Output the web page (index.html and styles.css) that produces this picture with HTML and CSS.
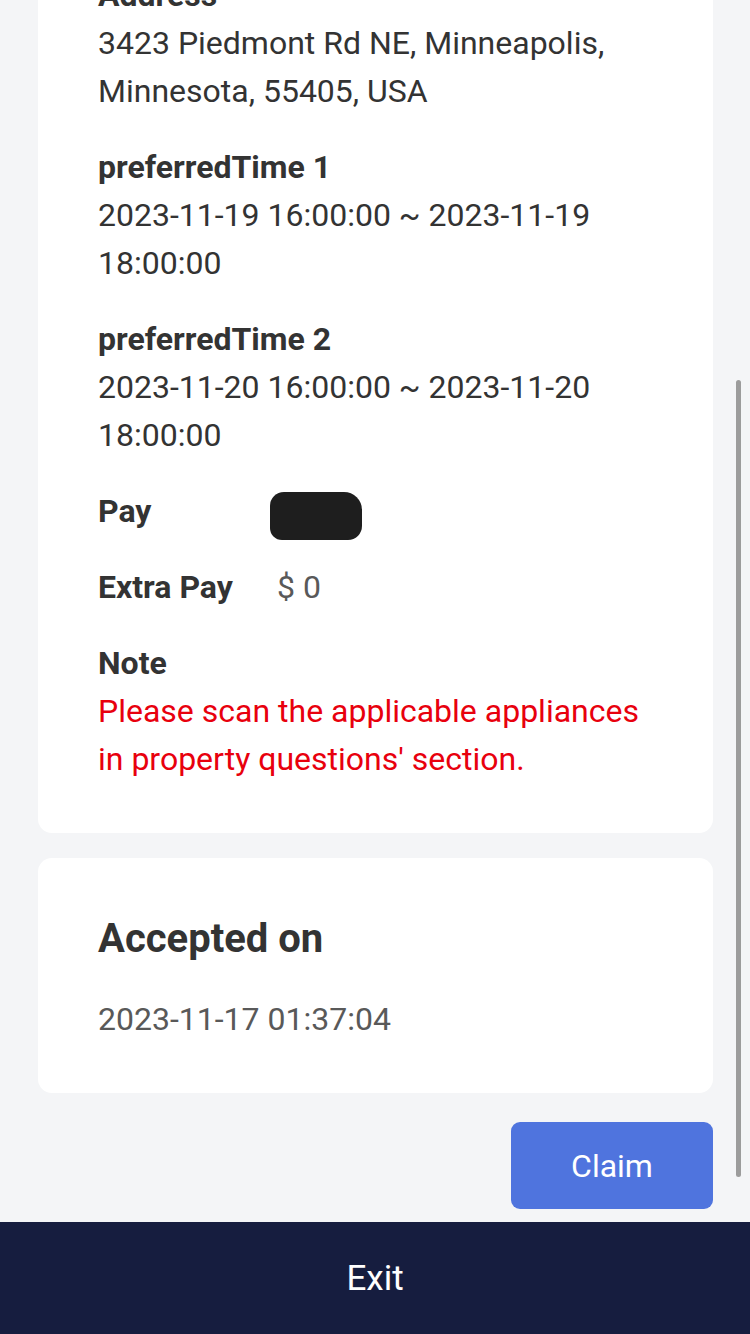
FILE: index.html
```html
<!DOCTYPE html>
<html lang="en">
<head>
<meta charset="utf-8">
<title>Job detail</title>
<link rel="stylesheet" href="styles.css">
</head>
<body>
<div class="page">
  <main class="scroll">
    <div class="scroll-content">
      <section class="card card-detail">
        <div class="item">
          <div class="label">Address</div>
          <div class="value">3423 Piedmont Rd NE, Minneapolis, Minnesota, 55405, USA</div>
        </div>
        <div class="item">
          <div class="label">preferredTime 1</div>
          <div class="value">2023-11-19 16:00:00 ~ 2023-11-19 18:00:00</div>
        </div>
        <div class="item">
          <div class="label">preferredTime 2</div>
          <div class="value">2023-11-20 16:00:00 ~ 2023-11-20 18:00:00</div>
        </div>
        <div class="item row">
          <div class="label label-fixed">Pay</div>
          <div class="value-inline"><span class="redacted"></span></div>
        </div>
        <div class="item row">
          <div class="label label-fixed">Extra Pay</div>
          <div class="value-inline muted money">$ 0</div>
        </div>
        <div class="item">
          <div class="label">Note</div>
          <div class="value note">Please scan the applicable appliances in property questions' section.</div>
        </div>
      </section>
      <section class="card card-accepted">
        <h2 class="heading">Accepted on</h2>
        <div class="value muted">2023-11-17 01:37:04</div>
      </section>
      <div class="actions">
        <button class="btn-claim" type="button">Claim</button>
      </div>
    </div>
    <div class="scroll-thumb"></div>
  </main>
  <footer class="exit-bar">Exit</footer>
</div>
</body>
</html>
```
FILE: styles.css
```css
* { box-sizing: border-box; }
html, body {
  margin: 0;
  padding: 0;
}
body {
  background: #f4f5f7;
  font-family: Roboto, "Liberation Sans", Arial, sans-serif;
  color: #333333;
}
.page {
  width: 750px;
  height: 1334px;
  display: flex;
  flex-direction: column;
  overflow: hidden;
}
.scroll {
  position: relative;
  flex: 1;
  overflow: hidden;
  background: #f4f5f7;
}
.scroll-content {
  margin-top: -79px;
  padding: 0 37px 0 38px;
  display: flex;
  flex-direction: column;
}
.card {
  background: #ffffff;
  border-radius: 14px;
  padding: 50px 60px;
}
.card-accepted {
  margin-top: 25px;
  padding-top: 57px;
}
.item {
  margin-bottom: 28px;
}
.item:last-child {
  margin-bottom: 0;
}
.label {
  font-size: 32px;
  line-height: 48px;
  font-weight: 700;
  color: #333333;
}
.value {
  font-size: 32px;
  line-height: 48px;
  color: #333333;
}
.row {
  display: flex;
  align-items: center;
}
.label-fixed {
  width: 172px;
  flex: none;
}
.value-inline {
  font-size: 32px;
  line-height: 48px;
  display: flex;
  align-items: center;
}
.money {
  padding-left: 7px;
}
.muted {
  color: #595959;
}
.note {
  color: #e8000d;
}
.redacted {
  display: block;
  width: 92px;
  height: 48px;
  transform: translateY(5px);
  background: #1e1e1e;
  border-radius: 14px 18px 14px 12px;
}
.heading {
  margin: 0 0 32px;
  font-size: 40px;
  line-height: 48px;
  font-weight: 700;
  color: #333333;
}
.actions {
  display: flex;
  justify-content: flex-end;
  margin-top: 29px;
}
.btn-claim {
  width: 202px;
  height: 87px;
  border: none;
  border-radius: 9px;
  background: #4f74de;
  color: #ffffff;
  font-family: Roboto, "Liberation Sans", Arial, sans-serif;
  font-size: 32px;
  padding: 0;
}
.scroll-thumb {
  position: absolute;
  right: 9px;
  top: 380px;
  width: 5px;
  height: 797px;
  border-radius: 3px;
  background: #9c9c9c;
}
.exit-bar {
  height: 112px;
  flex: none;
  background: #161d3f;
  color: #ffffff;
  font-size: 35px;
  display: flex;
  align-items: center;
  justify-content: center;
}
```
